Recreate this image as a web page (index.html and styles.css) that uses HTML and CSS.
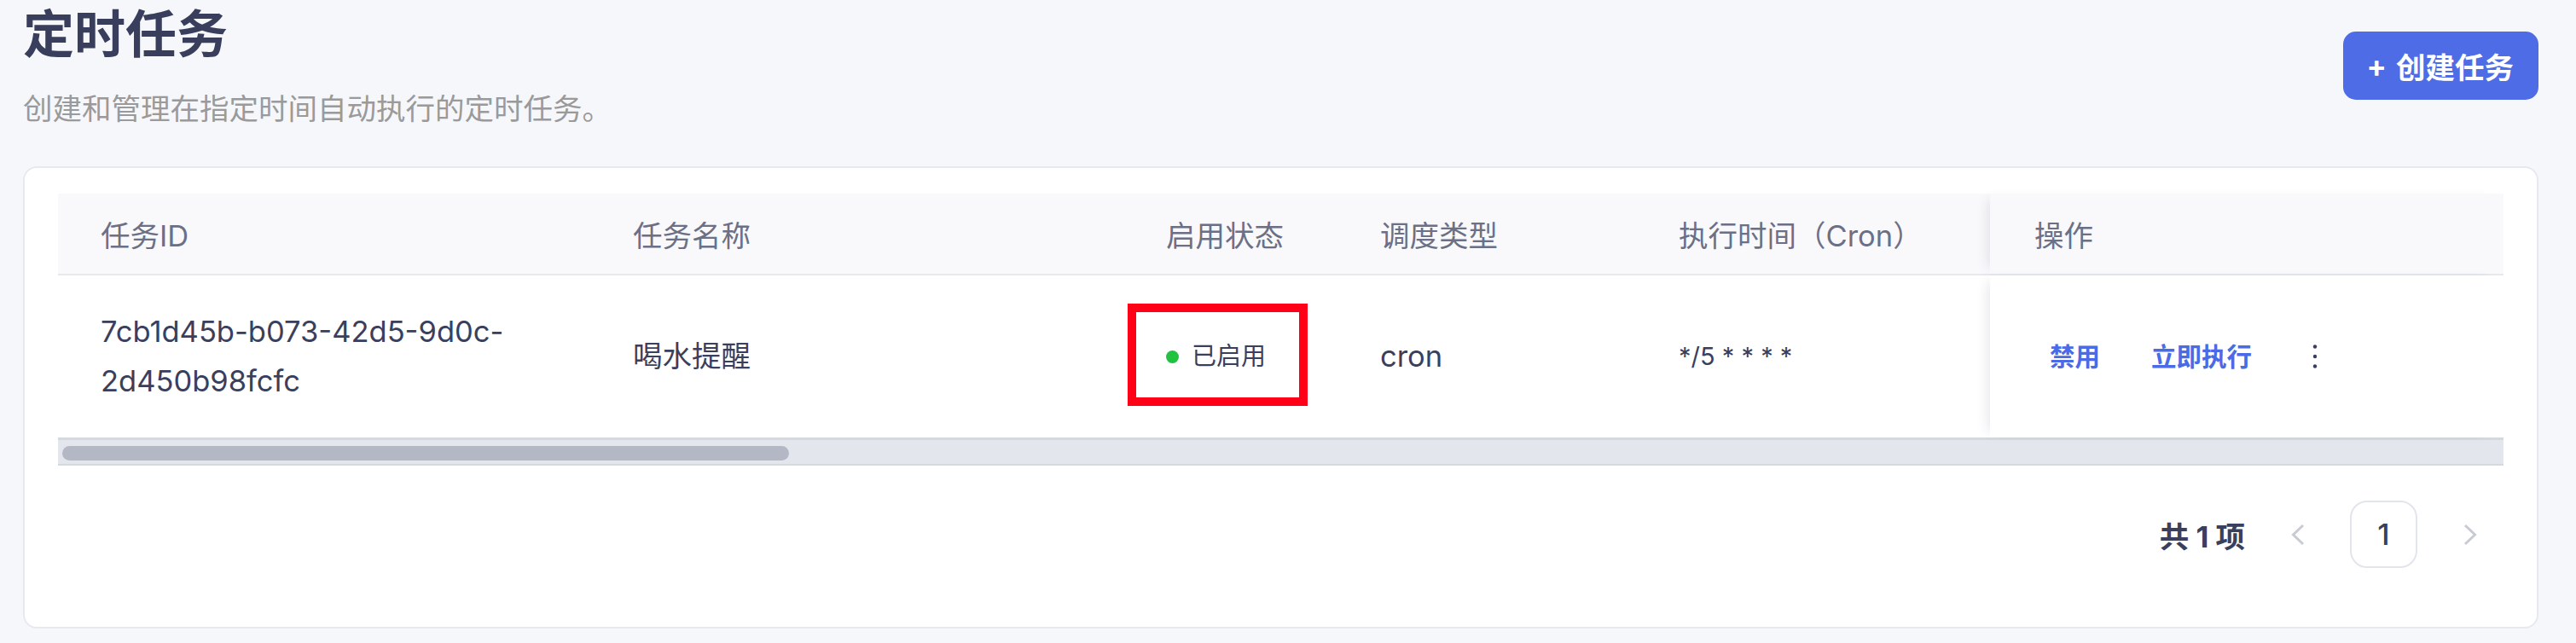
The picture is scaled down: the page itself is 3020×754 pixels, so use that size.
FILE: index.html
```html
<!DOCTYPE html>
<html lang="zh-CN">
<head>
<meta charset="utf-8">
<title>定时任务</title>
<link rel="stylesheet" href="styles.css">
</head>
<body>
<div class="page">
  <header class="page-head">
    <div class="titles">
      <h1 class="title">定时任务</h1>
      <p class="subtitle">创建和管理在指定时间自动执行的定时任务。</p>
    </div>
    <button class="btn-primary" type="button"><span class="plus">+</span><span>创建任务</span></button>
  </header>

  <section class="card">
    <div class="table">
      <div class="tr thead">
        <div class="th">任务ID</div>
        <div class="th">任务名称</div>
        <div class="th">启用状态</div>
        <div class="th">调度类型</div>
        <div class="th">执行时间（Cron）</div>
        <div class="th fixed">操作</div>
      </div>
      <div class="tr tbody">
        <div class="td id">7cb1d45b-b073-42d5-9d0c-<wbr>2d450b98fcfc</div>
        <div class="td">喝水提醒</div>
        <div class="td">
          <span class="status annot"><span class="dot"></span><span>已启用</span></span>
        </div>
        <div class="td">cron</div>
        <div class="td cron">*/5 * * * *</div>
        <div class="td fixed actions">
          <button class="link" type="button">禁用</button>
          <button class="link" type="button">立即执行</button>
          <button class="more" type="button" aria-label="更多">
            <svg width="6" height="30" viewBox="0 0 6 30"><circle cx="3" cy="3.5" r="2.2"/><circle cx="3" cy="15" r="2.2"/><circle cx="3" cy="26.5" r="2.2"/></svg>
          </button>
        </div>
      </div>
      <div class="scrollbar"><div class="thumb"></div></div>
    </div>

    <nav class="pager">
      <span class="total">共 1 项</span>
      <span class="pg-arrow">
        <svg width="16" height="26" viewBox="0 0 16 26"><polyline points="14,2 2.5,13 14,24"/></svg>
      </span>
      <span class="pg-num">1</span>
      <span class="pg-arrow">
        <svg width="16" height="26" viewBox="0 0 16 26"><polyline points="2,2 13.5,13 2,24"/></svg>
      </span>
    </nav>
  </section>
</div>
</body>
</html>
```

FILE: styles.css
```css
html, body {
  margin: 0;
  padding: 0;
}

body {
  background: #f6f7fb;
  font-family: Inter, "Noto Sans CJK SC", sans-serif;
  color: #3a3f5d;
}

.page {
  padding: 0 44px 0 27px;
}

.page-head {
  display: flex;
  justify-content: space-between;
  align-items: center;
}

.title {
  margin: 0;
  font-size: 60px;
  line-height: 80px;
  font-weight: 700;
  color: #393e5c;
}

.subtitle {
  margin: 22px 0 0;
  font-size: 34.5px;
  line-height: 52px;
  color: #9a9a9a;
}

.btn-primary {
  height: 80px;
  padding: 0 29px 0 28px;
  border: 0;
  border-radius: 15px;
  background: #4e6ce6;
  color: #fff;
  font-family: Inter, "Noto Sans CJK SC", sans-serif;
  font-size: 34.5px;
  font-weight: 700;
  display: inline-flex;
  align-items: center;
  gap: 11px;
}

.card {
  margin-top: 41px;
  background: #fff;
  border: 2px solid #e7e9ef;
  border-radius: 16px;
  padding: 30px 39px 69px;
}

.tr {
  display: grid;
  grid-template-columns: 624px 625px 251px 350px 415px 601px;
}

.thead {
  background: #f9f9fb;
  border-bottom: 2px solid #e7e9ef;
  height: 96px;
  box-sizing: border-box;
}

.th {
  padding-left: 50px;
  font-size: 34.5px;
  color: #6b7086;
  display: flex;
  align-items: center;
}

.td {
  padding: 37px 50px;
  font-size: 34.5px;
  line-height: 58px;
  display: flex;
  align-items: center;
  background: #fff;
}

.td.id {
  display: block;
  align-self: center;
}

.td.cron {
  font-size: 29px;
}

.fixed {
  padding-left: 52px;
  box-shadow: -10px 0 14px -8px rgba(30, 40, 80, 0.12);
}

.thead .fixed {
  background: #f9f9fb;
}

.status {
  display: inline-flex;
  align-items: center;
  gap: 15px;
  font-size: 29px;
  line-height: 40px;
}

.dot {
  width: 15px;
  height: 15px;
  border-radius: 50%;
  background: #20c240;
}

.annot {
  position: relative;
}

.annot::after {
  content: "";
  position: absolute;
  left: -45px;
  right: -49px;
  top: -42px;
  bottom: -38px;
  border: 10px solid #ff0016;
}

.actions {
  gap: 24px;
}

.link {
  border: 0;
  background: none;
  padding: 0 18px;
  font-family: Inter, "Noto Sans CJK SC", sans-serif;
  font-size: 29.5px;
  font-weight: 600;
  line-height: 40px;
  color: #4a6ae6;
}

.more {
  border: 0;
  background: none;
  width: 64px;
  height: 40px;
  padding: 0;
  display: flex;
  align-items: center;
  justify-content: center;
  fill: #3a3f5d;
}

.scrollbar {
  height: 33px;
  box-sizing: border-box;
  background: #e3e6ec;
  border-top: 3px solid #d4d8df;
  border-bottom: 2px solid #d4d8df;
  padding: 7px 0 0 5px;
}

.thumb {
  width: 852px;
  height: 17px;
  border-radius: 9px;
  background: #b4b8c5;
}

.pager {
  margin-top: 41px;
  display: flex;
  justify-content: flex-end;
  align-items: center;
  gap: 22px;
}

.total {
  font-size: 34.5px;
  font-weight: 700;
  color: #3a3f5d;
}

.pg-arrow,
.pg-num {
  width: 79px;
  height: 79px;
  box-sizing: border-box;
  display: flex;
  align-items: center;
  justify-content: center;
}

.pg-arrow polyline {
  fill: none;
  stroke: #c9cbd4;
  stroke-width: 3;
}

.pg-num {
  border: 2px solid #e3e5ec;
  border-radius: 20px;
  font-size: 34.5px;
  font-weight: 500;
  color: #3a3f5d;
}
```
